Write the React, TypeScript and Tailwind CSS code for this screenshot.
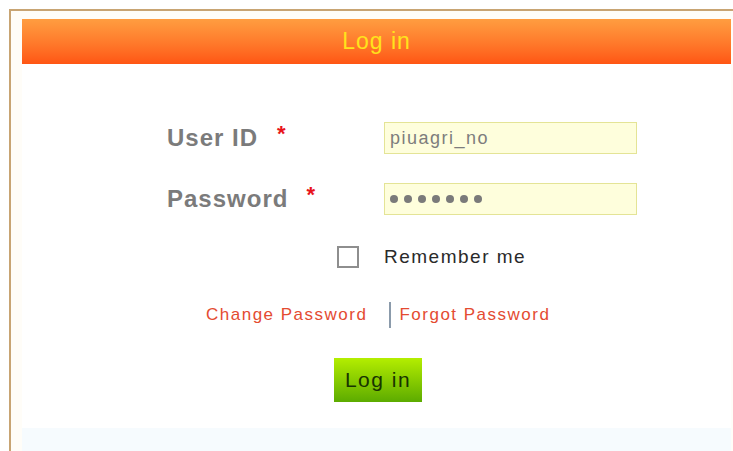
export default function App() {
  return (
    <div className="h-[451px] w-[733px] overflow-hidden bg-white font-['Liberation_Sans',Arial,sans-serif]">
      {/* outer frame, right and bottom edges run off the page */}
      <div className="ml-[9px] mt-[9px] h-[470px] w-[760px] border-l-2 border-t-2 border-[#c8a473] bg-[#fffdf8] pl-[11px] pt-[8px]">
        <div className="flex h-[45px] w-[709px] items-center justify-center bg-linear-to-b from-[#ff9d40] to-[#ff5513] text-[23px] tracking-[1px] text-[#ffe31c]">
          Log in
        </div>

        <div className="w-[709px] bg-white pb-[26px] pt-[58px]">
          <div className="grid grid-cols-[217px_253px] gap-y-[29px] pl-[145px]">
            <div className="flex items-center text-[24px] font-bold leading-[32px] tracking-[1px] text-[#7b7b7b]">
              User ID
              <span className="-mt-[8px] ml-[19px] text-[22px] text-[#e8141b]">*</span>
            </div>
            <div className="flex h-[32px] items-center border border-[#e4e496] bg-[#fefedc] pl-[5px] text-[18px] tracking-[1.5px] text-[#7d7d7d]">
              piuagri_no
            </div>

            <div className="flex items-center text-[24px] font-bold leading-[32px] tracking-[1px] text-[#7b7b7b]">
              Password
              <span className="-mt-[8px] ml-[18px] text-[22px] text-[#e8141b]">*</span>
            </div>
            <div className="flex h-[32px] items-center gap-[6px] border border-[#e4e496] bg-[#fefedc] pl-[5px]">
              {[0, 1, 2, 3, 4, 5, 6].map((i) => (
                <span key={i} className="h-[8px] w-[8px] rounded-full bg-[#7a7a7a]" />
              ))}
            </div>
          </div>

          <div className="mt-[30px] flex h-[24px] items-center pl-[315px]">
            <span className="h-[22px] w-[22px] border-2 border-[#8e8e8e] bg-white" />
            <span className="ml-[25px] text-[19px] leading-[24px] tracking-[1.5px] text-[#2a2a2a]">Remember me</span>
          </div>

          <div className="mt-[33px] flex h-[26px] items-center pl-[184px] text-[17px] tracking-[1.5px] text-[#e44b31]">
            <a href="#">Change Password</a>
            <span className="ml-[22px] mr-[8px] h-[26px] w-[2px] bg-[#8b9bab]" />
            <a href="#">Forgot Password</a>
          </div>

          <button className="ml-[312px] mt-[30px] flex h-[44px] w-[88px] items-center justify-center bg-linear-to-b from-[#b4ee00] to-[#5cab00] text-[21px] tracking-[1.5px] text-[#183400]">
            Log in
          </button>
        </div>

        <div className="h-[30px] w-[709px] bg-[#f6fbfe]" />
      </div>
    </div>
  );
}
